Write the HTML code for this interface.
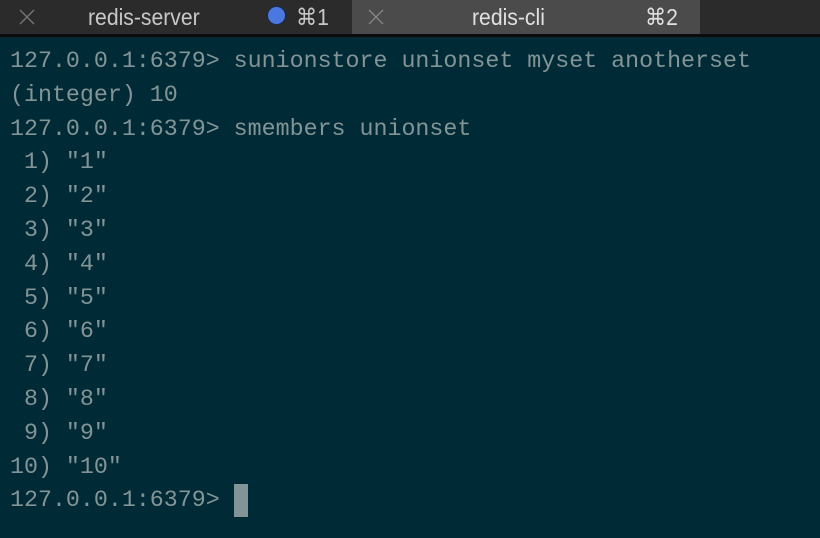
<!DOCTYPE html>
<html><head><style>
body{margin:0;width:820px;height:538px;background:#002b36;overflow:hidden;position:relative;font-family:"Liberation Sans",sans-serif}
.bar{position:absolute;left:0;top:0;width:820px;height:34px;background:#2b2b2b}
.line{position:absolute;left:0;top:34px;width:820px;height:3px;background:#0b0b0b}
.act{position:absolute;left:352px;top:0;width:348px;height:34px;background:#4b4b4b}
.t{position:absolute;top:0;height:34px;line-height:34px;font-size:23px;color:#c8c8c8;transform:scaleX(0.92);transform-origin:left}
.x{position:absolute;top:9px}
.dot{position:absolute;left:267px;top:6px;width:19px;height:19px;border-radius:50%;background:#4a78e0;border:1px solid #1a2a50;box-sizing:border-box}
pre{position:absolute;left:10px;top:45px;margin:0;font-family:"Liberation Mono",monospace;font-size:23.3px;line-height:33.8px;color:#839496}
.cur{position:absolute;left:234px;top:484px;width:14px;height:33px;background:#839496}
</style></head><body>
<div class="bar"></div>
<div class="act"></div>
<div class="line"></div>
<svg class="x" style="left:19px" width="16" height="16"><path d="M1 1L15 15M15 1L1 15" stroke="#777" stroke-width="1.3"/></svg>
<div class="t" style="left:88px">redis-server</div>
<div class="dot"></div>
<div class="t" style="left:296px">⌘1</div>
<svg class="x" style="left:368px" width="16" height="16"><path d="M1 1L15 15M15 1L1 15" stroke="#888" stroke-width="1.3"/></svg>
<div class="t" style="left:472px;color:#e0e0e0">redis-cli</div>
<div class="t" style="left:645px;color:#e0e0e0">⌘2</div>
<pre>127.0.0.1:6379&gt; sunionstore unionset myset anotherset
(integer) 10
127.0.0.1:6379&gt; smembers unionset
 1) "1"
 2) "2"
 3) "3"
 4) "4"
 5) "5"
 6) "6"
 7) "7"
 8) "8"
 9) "9"
10) "10"
127.0.0.1:6379&gt; </pre>
<div class="cur"></div>
</body></html>
